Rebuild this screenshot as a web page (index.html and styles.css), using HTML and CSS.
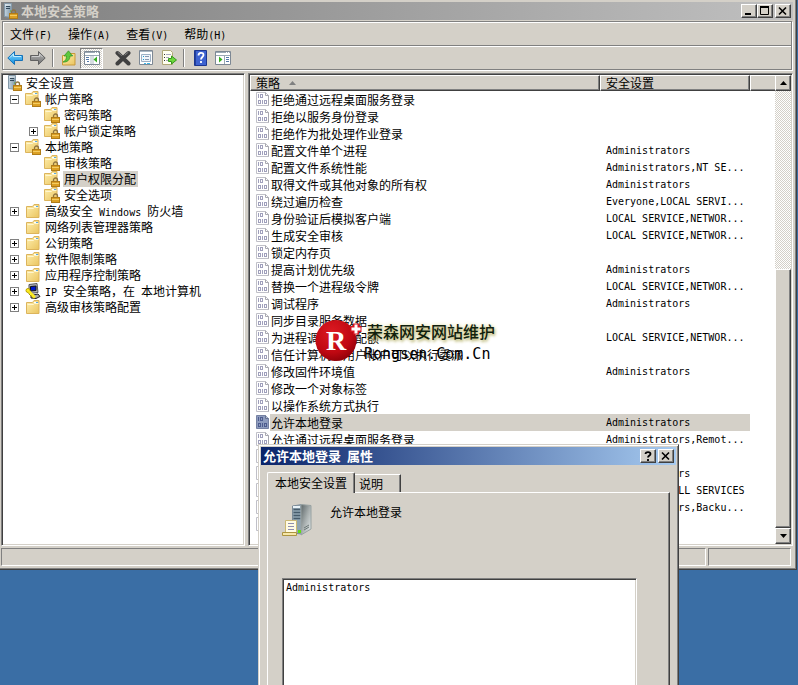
FILE: index.html
```html
<!DOCTYPE html>
<html lang="zh-CN">
<head>
<meta charset="utf-8">
<title>本地安全策略</title>
<link rel="stylesheet" href="styles.css">
</head>
<body>
<svg class="sprite" aria-hidden="true">
  <defs>
    <linearGradient id="gFolder" x1="0" y1="0" x2="1" y2="1"><stop offset="0" stop-color="#fff0b0"/><stop offset="1" stop-color="#eac45f"/></linearGradient>
    <linearGradient id="gBlue" x1="0" y1="0" x2="0" y2="1"><stop offset="0" stop-color="#8fdcff"/><stop offset="1" stop-color="#0a8de0"/></linearGradient>
    <linearGradient id="gGray" x1="0" y1="0" x2="0" y2="1"><stop offset="0" stop-color="#b8b8b8"/><stop offset="1" stop-color="#707070"/></linearGradient>
    <linearGradient id="gSteel" x1="0" y1="0" x2="1" y2="1"><stop offset="0" stop-color="#5c6668"/><stop offset=".5" stop-color="#a9b0b0"/><stop offset="1" stop-color="#e8eeee"/></linearGradient>
    <linearGradient id="gFront" x1="0" y1="0" x2="1" y2="0"><stop offset="0" stop-color="#c4d4e0"/><stop offset="1" stop-color="#8098a8"/></linearGradient>
    <radialGradient id="gRed" cx=".4" cy=".3" r=".75"><stop offset="0" stop-color="#dc1a22"/><stop offset=".65" stop-color="#c00812"/><stop offset="1" stop-color="#8c0008"/></radialGradient>
  </defs>
  <symbol id="lock" viewBox="0 0 9 10"><path d="M2.500 5V3a2 2 0 0 1 4 0v2" fill="none" stroke="#8f7440" stroke-width="1.300"/><rect x=".5" y="4.500" width="8" height="5" fill="#dca024" stroke="#b07c18"/><path d="M1 6.500h7" stroke="#f4cc60"/></symbol>
  <symbol id="folder" viewBox="0 0 16 16"><path d="M1.500 14.500v-11h6l1.500-2h5v13z" fill="url(#gFolder)" stroke="#dcb45c"/><path d="M9 3.500h4" stroke="#fff"/><path d="M11 3.500h2" stroke="#58a8e0"/><path d="M2.500 5.500h6l1-1h4" stroke="#fff6cf" fill="none"/></symbol>
  <symbol id="folder-lock" viewBox="0 0 16 16"><path d="M.5 13.500v-11h6l1.500-2h5v13z" fill="url(#gFolder)" stroke="#dcb45c"/><path d="M8 2.500h4" stroke="#fff"/><path d="M10 2.500h2" stroke="#58a8e0"/><path d="M1.500 4.500h6l1-1h4" stroke="#fff6cf" fill="none"/><use href="#lock" x="7" y="6" width="9" height="10"/></symbol>
  <symbol id="server-lock" viewBox="0 0 16 16"><path d="M1.500.5h7v14l-7-1z" fill="url(#gFront)" stroke="#8499a8"/><path d="M3 3.500h4M3 5.500h4" stroke="#33495a"/><path d="M2 2h6" stroke="#f2f8fb"/><path d="M7 8h1" stroke="#4fb82c"/><use href="#lock" x="6" y="6" width="9" height="10"/></symbol>
  <symbol id="ipsec" viewBox="0 0 16 16"><path d="M4 1.500 12 .5l1 9-9 1z" fill="#b8b8b8" stroke="#555"/><path d="M5.500 3.500 11 3v4.500l-5.500.5z" fill="#0018c8" stroke="#111"/><path d="M6 12.500 13 11l2 2.500-4 2-5-.5z" fill="#aaa" stroke="#222"/><circle cx="3" cy="7.500" r="2" fill="#ffee20" stroke="#b8a000"/><path d="m4 8.500 6 6" stroke="#ffee20" stroke-width="2.500"/><path d="m3.500 10.500 5 5" stroke="#a89400"/></symbol>
  <symbol id="policy" viewBox="0 0 13 14"><path d="M.5.5h9l3 3v10H.5z" fill="#fff" stroke="#c0c0c8"/><path d="M9.500.5v3h3v10" fill="none" stroke="#a8a8b0"/><g fill="none" stroke="#a0a0bc"><path d="M2.500 2v4"/><rect x="4.500" y="2.500" width="2" height="3"/><rect x="2.500" y="8.500" width="2" height="3"/><path d="M6.500 8v4"/><rect x="8.500" y="8.500" width="2" height="3"/></g></symbol>
  <symbol id="policy-on" viewBox="0 0 13 14"><path d="M.5.5h9l3 3v10H.5z" fill="#8e9cbe" stroke="#7581a2"/><path d="M9.500.5v3h3" fill="#b4bed6" stroke="#65718f"/><g fill="none" stroke="#4d5c8e"><path d="M2.500 2v4"/><rect x="4.500" y="2.500" width="2" height="3"/><rect x="2.500" y="8.500" width="2" height="3"/><path d="M6.500 8v4"/><rect x="8.500" y="8.500" width="2" height="3"/></g></symbol>
  <symbol id="pane" viewBox="0 0 16 14"><path d="M.5.5h15v13H.5z" fill="#fff" stroke="#7d8894"/><path d="M1 1.500h14" stroke="#9aa8b4"/><path d="M11 1.500h1M13 1.500h1" stroke="#fff"/><path d="M1 4.500h14" stroke="#9aa8b4"/></symbol>
</svg>

<main class="window app">
  <header class="titlebar idle">
    <svg class="i16"><use href="#server-lock"/></svg>
    <h1>本地安全策略</h1>
    <div class="controls">
      <button aria-label="最小化"><svg viewBox="0 0 12 10"><path d="M2 8h6" stroke="#000" stroke-width="2"/></svg></button>
      <button aria-label="最大化"><svg viewBox="0 0 12 10"><path d="M1.500 1v7.500h8V1" fill="none" stroke="#000"/><path d="M1 1h9" stroke="#000" stroke-width="2"/></svg></button>
      <button class="close" aria-label="关闭"><svg viewBox="0 0 12 10"><path d="m2 1.500 7 7m0-7-7 7" stroke="#000" stroke-width="1.600"/></svg></button>
    </div>
  </header>

  <div class="rebar">
    <nav class="menu">
      <button>文件<span class="lat">(F)</span></button>
      <button>操作<span class="lat">(A)</span></button>
      <button>查看<span class="lat">(V)</span></button>
      <button>帮助<span class="lat">(H)</span></button>
    </nav>
    <div class="toolbar">
      <button aria-label="后退"><svg class="i16" viewBox="0 0 16 16"><path d="M.8 8 7.500 1.500v4h8v5h-8v4z" fill="url(#gBlue)" stroke="#1671b8"/><path d="M3 7.500 6.500 4v2.500H14" fill="none" stroke="#c4efff"/></svg></button>
      <button aria-label="前进"><svg class="i16" viewBox="0 0 16 16"><path d="M15.200 8 8.500 1.500v4h-8v5h8v4z" fill="url(#gGray)" stroke="#606060"/><path d="M2 6.500h7.500V4l3 3" fill="none" stroke="#cfcfcf"/></svg></button>
      <i class="sep"></i>
      <button aria-label="上移"><svg class="i16" viewBox="0 0 16 16"><path d="M1.500 15v-9.500h5l1.500-2h6V15z" fill="url(#gFolder)" stroke="#c99a3a"/><path d="M10 5.500h2" stroke="#58a8e0"/><path d="M2 12c2.500-1 3.500-3 3.500-6H3L7.500.8 11.500 6H9c0 4-3 6.500-7 6z" fill="#5dc93c" stroke="#2f8f20" stroke-width=".7"/></svg></button>
      <button class="pressed" aria-label="显示控制台树"><svg class="i16" viewBox="0 0 16 16"><use href="#pane" y="1" width="16" height="14"/><path d="M7 6v8M9 6v8" stroke="#9aa8b4" stroke-width=".8"/><path d="M2 7.500h3M2 9.500h3M3 11.500h2" stroke="#5578a8"/><path d="M13 6.500v6L9.500 9.500z" fill="#35b020"/></svg></button>
      <button aria-label="删除"><svg class="i16" viewBox="0 0 16 16"><path d="m2.500 3 11 10.500M13.500 3l-11 10.500" stroke="#404040" stroke-width="4" stroke-linecap="round"/><path d="m3 2.500 3.500 3M13 2.500l-3 2.500" stroke="#808080" stroke-linecap="round"/></svg></button>
      <button aria-label="属性"><svg class="i16" viewBox="0 0 16 16"><path d="M1.500.5h13v14h-13z" fill="#fff" stroke="#7d8894"/><path d="M2 1.500h12" stroke="#a9b8c4"/><path d="M3.500 4.500h9v7h-9z" fill="#f0f5fa" stroke="#9db0c4"/><path d="M5 6.500h1M5 9.500h1" stroke="#17a2d8"/><path d="M7 6.500h4M7 9.500h4" stroke="#8898b0"/><path d="M6 13.500h2M9 13.500h3" stroke="#40b8e8"/></svg></button>
      <button aria-label="导出列表"><svg class="i16" viewBox="0 0 16 16"><path d="M1.500.5h8l2 2v12h-10z" fill="#fffef0" stroke="#b0a878"/><path d="M3 4.500h1M3 7.500h1M3 10.500h1" stroke="#333"/><path d="M5 4.500h5M5 7.500h3M5 10.500h3" stroke="#a9a9c0"/><path d="M7.500 8.500h3V6l5 4-5 4v-2.500h-3z" fill="#6cd83c" stroke="#36981c"/></svg></button>
      <i class="sep"></i>
      <button aria-label="帮助"><svg class="i16" viewBox="0 0 16 16"><path d="M2.500.5h12v15h-12z" fill="#3d62d0" stroke="#1c3690"/><path d="M3.500 1v14" stroke="#223f9c"/><path d="M6.500 5.500c0-3.500 5-3.500 5-.5 0 2-2.500 2-2.500 4.500M9 11v2" fill="none" stroke="#fff" stroke-width="1.800"/></svg></button>
      <button aria-label="显示操作窗格"><svg class="i16" viewBox="0 0 16 16"><use href="#pane" y="1" width="16" height="14"/><path d="M9.500 6v8" stroke="#9aa8b4"/><path d="M11 7.500h3M11 9.500h3M11 11.500h3" stroke="#5578a8"/><path d="M4 6.500v6l3.500-3z" fill="#35b020"/></svg></button>
    </div>
  </div>

  <div class="panes">
    <nav class="sunken tree">
      <div class="node root"><svg class="i16"><use href="#server-lock"/></svg><span>安全设置</span></div>
      <ul>
        <li><div class="node"><button class="box" aria-label="折叠"></button><svg class="i16"><use href="#folder-lock"/></svg><span>帐户策略</span></div>
          <ul>
            <li><div class="node"><i class="nobox"></i><svg class="i16"><use href="#folder-lock"/></svg><span>密码策略</span></div></li>
            <li><div class="node"><button class="box plus" aria-label="展开"></button><svg class="i16"><use href="#folder-lock"/></svg><span>帐户锁定策略</span></div></li>
          </ul>
        </li>
        <li><div class="node"><button class="box" aria-label="折叠"></button><svg class="i16"><use href="#folder-lock"/></svg><span>本地策略</span></div>
          <ul>
            <li><div class="node"><i class="nobox"></i><svg class="i16"><use href="#folder-lock"/></svg><span>审核策略</span></div></li>
            <li><div class="node"><i class="nobox"></i><svg class="i16"><use href="#folder-lock"/></svg><span class="current">用户权限分配</span></div></li>
            <li><div class="node"><i class="nobox"></i><svg class="i16"><use href="#folder-lock"/></svg><span>安全选项</span></div></li>
          </ul>
        </li>
        <li><div class="node"><button class="box plus" aria-label="展开"></button><svg class="i16"><use href="#folder"/></svg><span>高级安全<span class="lat"> Windows </span>防火墙</span></div></li>
        <li><div class="node"><i class="nobox"></i><svg class="i16"><use href="#folder"/></svg><span>网络列表管理器策略</span></div></li>
        <li><div class="node"><button class="box plus" aria-label="展开"></button><svg class="i16"><use href="#folder"/></svg><span>公钥策略</span></div></li>
        <li><div class="node"><button class="box plus" aria-label="展开"></button><svg class="i16"><use href="#folder"/></svg><span>软件限制策略</span></div></li>
        <li><div class="node"><button class="box plus" aria-label="展开"></button><svg class="i16"><use href="#folder"/></svg><span>应用程序控制策略</span></div></li>
        <li><div class="node"><button class="box plus" aria-label="展开"></button><svg class="i16"><use href="#ipsec"/></svg><span><span class="lat">IP </span>安全策略，在<span class="lat"> </span>本地计算机</span></div></li>
        <li><div class="node"><button class="box plus" aria-label="展开"></button><svg class="i16"><use href="#folder"/></svg><span>高级审核策略配置</span></div></li>
      </ul>
    </nav>

    <section class="sunken list">
      <table>
        <colgroup><col><col class="c-setting"><col class="c-rest"></colgroup>
        <thead><tr><th>策略 <svg class="sort" viewBox="0 0 7 4"><path d="M0 4h7L3.500 0z" fill="#808080"/></svg></th><th>安全设置</th><th></th></tr></thead>
        <tbody>
          <tr><td><div><svg><use href="#policy"/></svg><span>拒绝通过远程桌面服务登录</span></div></td><td></td><td></td></tr>
          <tr><td><div><svg><use href="#policy"/></svg><span>拒绝以服务身份登录</span></div></td><td></td><td></td></tr>
          <tr><td><div><svg><use href="#policy"/></svg><span>拒绝作为批处理作业登录</span></div></td><td></td><td></td></tr>
          <tr><td><div><svg><use href="#policy"/></svg><span>配置文件单个进程</span></div></td><td>Administrators</td><td></td></tr>
          <tr><td><div><svg><use href="#policy"/></svg><span>配置文件系统性能</span></div></td><td>Administrators,NT SE...</td><td></td></tr>
          <tr><td><div><svg><use href="#policy"/></svg><span>取得文件或其他对象的所有权</span></div></td><td>Administrators</td><td></td></tr>
          <tr><td><div><svg><use href="#policy"/></svg><span>绕过遍历检查</span></div></td><td>Everyone,LOCAL SERVI...</td><td></td></tr>
          <tr><td><div><svg><use href="#policy"/></svg><span>身份验证后模拟客户端</span></div></td><td>LOCAL SERVICE,NETWOR...</td><td></td></tr>
          <tr><td><div><svg><use href="#policy"/></svg><span>生成安全审核</span></div></td><td>LOCAL SERVICE,NETWOR...</td><td></td></tr>
          <tr><td><div><svg><use href="#policy"/></svg><span>锁定内存页</span></div></td><td></td><td></td></tr>
          <tr><td><div><svg><use href="#policy"/></svg><span>提高计划优先级</span></div></td><td>Administrators</td><td></td></tr>
          <tr><td><div><svg><use href="#policy"/></svg><span>替换一个进程级令牌</span></div></td><td>LOCAL SERVICE,NETWOR...</td><td></td></tr>
          <tr><td><div><svg><use href="#policy"/></svg><span>调试程序</span></div></td><td>Administrators</td><td></td></tr>
          <tr><td><div><svg><use href="#policy"/></svg><span>同步目录服务数据</span></div></td><td></td><td></td></tr>
          <tr><td><div><svg><use href="#policy"/></svg><span>为进程调整内存配额</span></div></td><td>LOCAL SERVICE,NETWOR...</td><td></td></tr>
          <tr><td><div><svg><use href="#policy"/></svg><span>信任计算机和用户帐户可以执行委派</span></div></td><td></td><td></td></tr>
          <tr><td><div><svg><use href="#policy"/></svg><span>修改固件环境值</span></div></td><td>Administrators</td><td></td></tr>
          <tr><td><div><svg><use href="#policy"/></svg><span>修改一个对象标签</span></div></td><td></td><td></td></tr>
          <tr><td><div><svg><use href="#policy"/></svg><span>以操作系统方式执行</span></div></td><td></td><td></td></tr>
          <tr class="selected"><td><div><svg><use href="#policy-on"/></svg><span>允许本地登录</span></div></td><td>Administrators</td><td></td></tr>
          <tr><td><div><svg><use href="#policy"/></svg><span>允许通过远程桌面服务登录</span></div></td><td>Administrators,Remot...</td><td></td></tr>
          <tr><td><div><svg><use href="#policy"/></svg></div></td><td></td><td></td></tr>
          <tr><td><div><svg><use href="#policy"/></svg></div></td><td>Administrators</td><td></td></tr>
          <tr><td><div><svg><use href="#policy"/></svg></div></td><td>NT SERVICE\ALL SERVICES</td><td></td></tr>
          <tr><td><div><svg><use href="#policy"/></svg></div></td><td>Administrators,Backu...</td><td></td></tr>
          <tr><td><div><svg><use href="#policy"/></svg></div></td><td></td><td></td></tr>
        </tbody>
      </table>
      <div class="scrollbar">
        <button aria-label="向上滚动"><svg viewBox="0 0 7 4"><path d="M0 4h7L3.500 0z"/></svg></button>
        <div class="track"></div>
        <div class="thumb"></div>
        <button aria-label="向下滚动"><svg viewBox="0 0 7 4"><path d="M0 0h7L3.500 4z"/></svg></button>
      </div>
    </section>
  </div>

  <footer class="status"><div></div><div></div></footer>
</main>

<aside class="watermark">
  <svg class="badge" viewBox="0 0 48 44"><circle cx="21" cy="22.500" r="20.500" fill="url(#gRed)"/><text x="21" y="32" text-anchor="middle" class="initial">R</text><path d="M41 5.500v11M35.500 11h11" stroke="#d81420" stroke-width="6"/><path d="M41 6.500v9M36.500 11h9" stroke="#fff" stroke-width="3"/></svg>
  <div class="brand"><strong>荣森网安网站维护</strong><b>Rongsen.Com.Cn</b></div>
</aside>

<section class="window dialog" role="dialog" aria-labelledby="dlg">
  <header class="titlebar active">
    <h2 id="dlg">允许本地登录<span class="lat"> </span>属性</h2>
    <div class="controls">
      <button aria-label="帮助"><svg viewBox="0 0 12 10"><path d="M3.500 3c0-2.500 5-2.500 5 0 0 1.500-2.500 1.500-2.500 3.500M6 8v2" fill="none" stroke="#000" stroke-width="1.800"/></svg></button>
      <button class="close" aria-label="关闭"><svg viewBox="0 0 12 10"><path d="m2 1.500 7 7m0-7-7 7" stroke="#000" stroke-width="1.600"/></svg></button>
    </div>
  </header>
  <div class="tabs" role="tablist">
    <button role="tab" aria-selected="true" class="on">本地安全设置</button>
    <button role="tab" aria-selected="false">说明</button>
  </div>
  <div class="page">
    <div class="subject">
      <svg viewBox="0 0 30 32"><path d="M10.500 2 20 .5V30l-9.500-1z" fill="#91a4b2" stroke="#7b8b98"/><path d="M11.500 5.500h7M11.500 8.500h7M11.500 11.500h7M11.500 14.500h7" stroke="#465b6b" stroke-width="1.500"/><path d="M11 3h7" stroke="#e8f2f8" stroke-width="2"/><path d="M19 .5 29 1.500v23.500L19 31z" fill="url(#gSteel)" stroke="#98a2a2"/><path d="m22 26 5-3M22 24l5-3" stroke="#6c7877"/><path d="M16 27.500h3" stroke="#60e010" stroke-width="3"/><path d="M3.500 16.500h11v12h-11z" fill="#fffbe4" stroke="#cbb874"/><path d="M6 19.500h6M6 22.500h6M6 25.500h6" stroke="#8f8fb0"/><path d="M.5 28.500h14v3H.5z" fill="#f6e7a8" stroke="#ac9440"/></svg>
      <p>允许本地登录</p>
    </div>
    <ul class="sunken members"><li>Administrators</li></ul>
  </div>
</section>
</body>
</html>
```
FILE: styles.css
```css
:root {
  --face: #d4d0c8;
  --shade: #808080;
  --dark: #404040;
}

* { box-sizing: border-box; }

body {
  margin: 0;
  min-height: 100vh;
  position: relative;
  overflow: hidden;
  background: #3a6ea5;
  color: #000;
  font: 12px/16px "Noto Sans CJK SC", sans-serif;
}

button {
  margin: 0;
  padding: 0;
  border: 0;
  background: none;
  color: inherit;
  font: inherit;
}

svg { display: block; flex: none; }
ul { margin: 0; padding: 0; list-style: none; }
h1, h2, p { margin: 0; font-weight: normal; }

.sprite { position: absolute; width: 0; height: 0; }
.i16 { width: 16px; height: 16px; }
.lat { font: 10px/14px "DejaVu Sans Mono", monospace; white-space: pre; }

.sunken {
  border: 1px solid;
  border-color: var(--shade) #fff #fff var(--shade);
  box-shadow: inset 1px 1px 0 var(--dark), inset -1px -1px 0 var(--face);
  padding: 1px;
  background: #fff;
}

.window { position: absolute; background: var(--face); }

.app {
  left: 0;
  top: 0;
  right: 1px;
  padding: 2px 3px 3px 1px;
  border: solid var(--dark);
  border-width: 0 1px 1px 0;
  box-shadow: inset -1px -1px 0 var(--shade);
}

/* Title bars */
.titlebar { display: flex; align-items: center; height: 18px; padding: 0 2px; }
.titlebar.idle { background: linear-gradient(90deg, #808080, #c0c0c0); color: var(--face); }
.titlebar.active { background: linear-gradient(90deg, #0a246a, #a6caf0); color: #fff; }
.titlebar h1, .titlebar h2 {
  flex: 1;
  padding-left: 2px;
  font-size: 13px;
  line-height: 18px;
  font-weight: bold;
}
.titlebar.active h2 { padding-left: 0; }
.controls { display: flex; }
.controls button, .scrollbar button, .thumb {
  background: var(--face);
  border: 1px solid;
  border-color: #fff var(--dark) var(--dark) #fff;
  box-shadow: inset -1px -1px 0 var(--shade);
}
.controls button { width: 16px; height: 14px; padding: 1px; }
.controls .close { margin-left: 2px; }
.controls svg { width: 12px; height: 10px; }

/* Menu and toolbar */
.rebar {
  margin: 1px 1px 3px;
  border: 1px solid var(--shade);
  box-shadow: 1px 1px 0 #fff, inset 1px 1px 0 #fff;
}
.menu { display: flex; gap: 16px; height: 24px; padding: 1px 7px 0; border-bottom: 1px solid var(--shade); }
.toolbar {
  display: flex;
  align-items: center;
  height: 23px;
  border-top: 1px solid #fff;
}
.toolbar button { width: 23px; height: 21px; display: grid; place-items: center; }
.toolbar .pressed {
  margin-right: 8px;
  border: 1px solid;
  border-color: var(--shade) #fff #fff var(--shade);
  background: repeating-conic-gradient(#fff 0 25%, var(--face) 0 50%) 0 0 / 2px 2px;
}
.sep { width: 2px; height: 18px; margin: 0 3px; border-left: 1px solid var(--shade); border-right: 1px solid #fff; }

/* Content panes */
.panes { display: grid; grid-template-columns: 244px minmax(0, 1fr); gap: 3px; }

.tree ul { padding-left: 7px; }
.tree ul ul { padding-left: 19px; }
.node { display: flex; align-items: center; height: 16px; white-space: nowrap; }
.node.root { padding-left: 4px; }
.node > svg { margin-right: 3px; }
.node.root > svg { margin-right: 2px; }
.node > span { padding: 0 2px 0 1px; }
.node > .current { background: var(--face); }
.box, .nobox { width: 9px; height: 9px; margin-right: 6px; }
.box {
  border: 1px solid var(--shade);
  background: linear-gradient(#000, #000) center / 5px 1px no-repeat;
}
.box.plus {
  background:
    linear-gradient(#000, #000) center / 5px 1px no-repeat,
    linear-gradient(#000, #000) center / 1px 5px no-repeat;
}

.list { display: flex; }
.list table { flex: 1; align-self: flex-start; margin-bottom: 11px; table-layout: fixed; border-collapse: separate; border-spacing: 0; }
.c-setting { width: 150px; }
.c-rest { width: 25px; }
.list th {
  height: 16px;
  padding: 0 5px;
  border: 1px solid;
  border-color: #fff var(--dark) var(--dark) #fff;
  box-shadow: inset -1px -1px 0 var(--shade);
  background: var(--face);
  font-weight: normal;
  line-height: 14px;
  text-align: left;
  white-space: nowrap;
}
.list th:last-child { border-right: 0; box-shadow: inset 0 -1px 0 var(--shade); }
.sort { display: inline-block; width: 7px; height: 4px; margin: 0 0 3px 6px; }
.list td { height: 17px; padding: 0; }
.list td:nth-child(2) { padding-left: 6px; font: 10px/17px "DejaVu Sans Mono", monospace; white-space: nowrap; }
.list td div { display: flex; height: 17px; padding-left: 6px; }
.list td svg { width: 13px; height: 14px; margin: 1px 1px 0 0; }
.list td span { flex: 1; padding-left: 1px; line-height: 17px; white-space: nowrap; }
.selected td:nth-child(2), .selected span { background: var(--face); }

.scrollbar { display: flex; flex-direction: column; flex: 0 0 16px; }
.scrollbar button { display: grid; place-items: center; height: 16px; }
.scrollbar button svg { width: 7px; height: 4px; }
.track { flex: 179; background: repeating-conic-gradient(#fff 0 25%, var(--face) 0 50%) 0 0 / 2px 2px; }
.thumb { flex: 258; }

.status { display: flex; gap: 2px; margin-top: 2px; padding-right: 2px; }
.status div { height: 18px; flex: 1; border: 1px solid; border-color: var(--shade) #fff #fff var(--shade); }
.status div:last-child { flex: 0 0 83px; }

/* Watermark */
.watermark { position: absolute; left: 315px; top: 318px; display: flex; pointer-events: none; }
.badge { width: 48px; height: 44px; }
.initial { font: bold 28px "Liberation Serif", serif; fill: #fff; }
.brand { padding: 2px 0 0 1px; }
.brand strong, .brand b { display: block; white-space: nowrap; }
.brand strong {
  padding-left: 3px;
  font-size: 16px;
  line-height: 23px;
  font-weight: 500;
  color: #10200c;
  text-shadow: 1px 2px 3px #b4b070, 0 0 4px #e4e0a0;
}
.brand b { font: 15px/22px "DejaVu Sans Mono", monospace; }

/* Properties dialog */
.dialog {
  left: 258px;
  top: 444px;
  width: 421px;
  bottom: 0;
  display: flex;
  flex-direction: column;
  padding: 2px;
  border: solid;
  border-width: 1px 1px 0;
  border-color: var(--face) var(--dark) var(--face) var(--face);
  box-shadow: inset 1px 1px 0 #fff, inset -1px 0 0 var(--shade);
}
.tabs { display: flex; align-items: flex-end; margin: 7px 0 0 6px; }
.tabs button {
  height: 18px;
  padding: 0 17px 0 4px;
  border: solid;
  border-width: 1px 1px 0 0;
  border-color: #fff var(--dark) #fff #fff;
  box-shadow: inset -1px 0 0 var(--shade);
}
.tabs .on {
  position: relative;
  height: 21px;
  margin-bottom: -1px;
  padding: 0 7px;
  border-left-width: 1px;
  border-radius: 2px 2px 0 0;
  background: var(--face);
}
.page {
  flex: 1;
  margin: 0 6px;
  padding: 11px 32px 0 14px;
  border: solid;
  border-width: 1px 1px 0;
  border-color: #fff var(--dark) #fff #fff;
  box-shadow: inset -1px 0 0 var(--shade);
}
.subject { display: flex; gap: 18px; margin-bottom: 42px; }
.subject svg { width: 30px; height: 32px; }
.members { min-height: 120px; padding: 0 3px; font: 10px/17px "DejaVu Sans Mono", monospace; }
```
